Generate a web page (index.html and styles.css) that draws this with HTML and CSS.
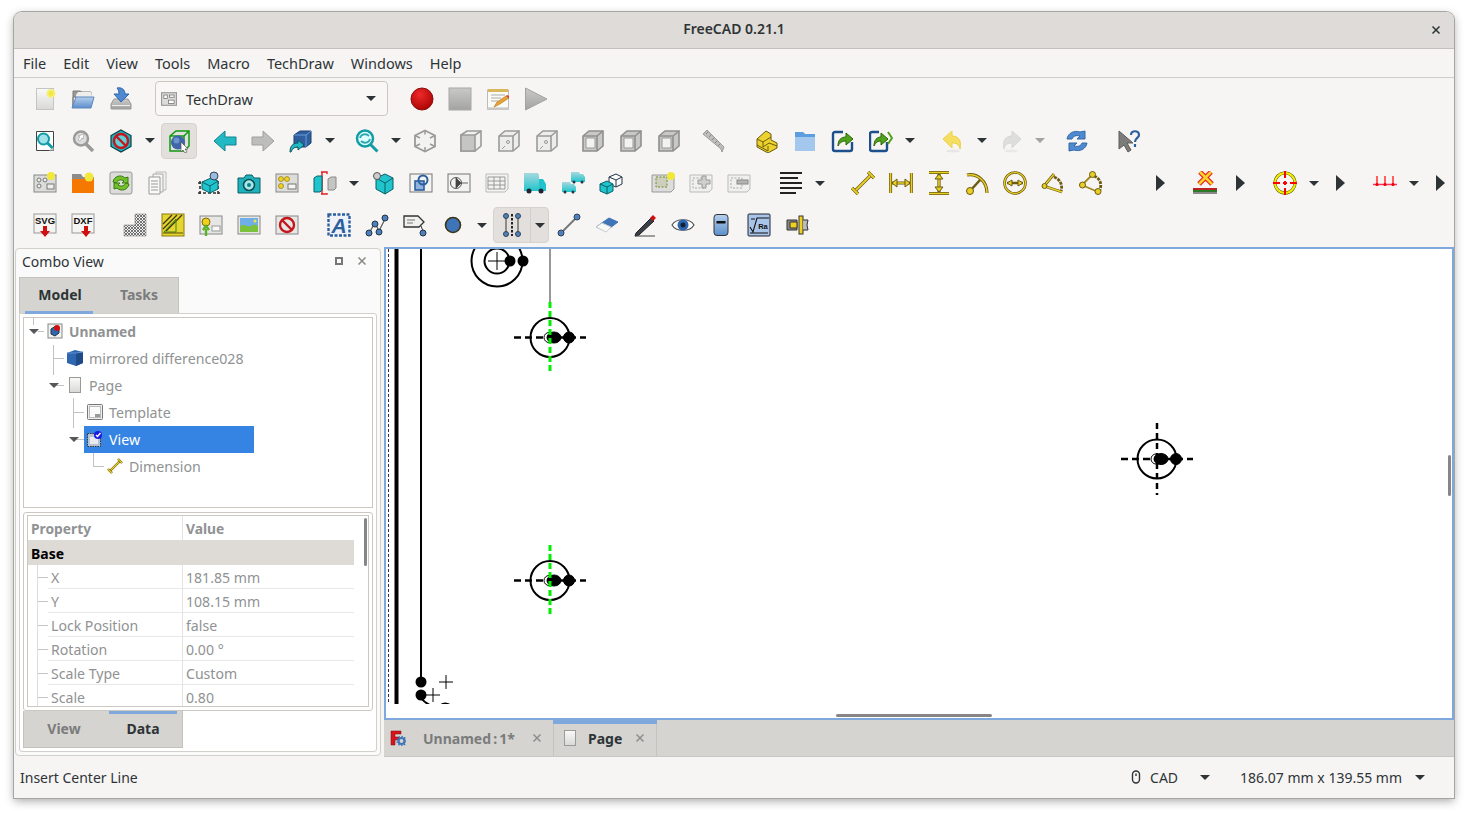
FILE: index.html
```html
<!DOCTYPE html>
<html lang="en">
<head>
    <meta charset="UTF-8">
    <title>FreeCAD 0.21.1</title>
    <link rel="stylesheet" href="styles.css">
</head>
<body>
<!-- icon sprite -->
<svg class="sprite" xmlns="http://www.w3.org/2000/svg">
    <defs>
        <linearGradient id="pg" x1="0" y1="0" x2="0" y2="1"><stop offset="0" stop-color="#fafafa"/><stop offset="1" stop-color="#d8d8d6"/></linearGradient>
        <linearGradient id="blueg" x1="0" y1="0" x2="0" y2="1"><stop offset="0" stop-color="#b5d0ee"/><stop offset="1" stop-color="#5c8fcb"/></linearGradient>
        <linearGradient id="greyg" x1="0" y1="0" x2="0" y2="1"><stop offset="0" stop-color="#c9c9c7"/><stop offset="1" stop-color="#a3a3a1"/></linearGradient>
        <radialGradient id="redg" cx=".4" cy=".3" r=".8"><stop offset="0" stop-color="#ef2929"/><stop offset="1" stop-color="#a40000"/></radialGradient>
        <linearGradient id="teal" x1="0" y1="0" x2="0" y2="1"><stop offset="0" stop-color="#a8d8de"/><stop offset="1" stop-color="#1fc4cc"/></linearGradient>

        <symbol id="i-new" viewBox="0 0 24 24"><rect x="3.5" y="1.5" width="17" height="21" fill="url(#pg)" stroke="#c4c4c2"/><circle cx="18" cy="6.5" r="4.5" fill="#f6ee7c"/><circle cx="18" cy="6.5" r="2.5" fill="#f3e83a"/></symbol>
        <symbol id="i-open" viewBox="0 0 24 24"><path d="M2 20V4h7l2 1h9v5H2z" fill="#999" stroke="#7a7a7a"/><path d="M5 8l2-3h13l1 5H5z" fill="#eee"/><path d="M5 10h18l-3 11H1z" fill="url(#blueg)" stroke="#5c86ba"/></symbol>
        <symbol id="i-save" viewBox="0 0 24 24"><path d="M5 12h14l3 5v5H2v-5z" fill="url(#greyg)" stroke="#999"/><rect x="3" y="18" width="18" height="1" fill="#eee"/><path d="M8 1c5-1 8 2 8 6h4l-8 8-7-8h5c0-3-1-5-2-6z" fill="#4f8ad0" stroke="#2f66a8"/></symbol>
        <symbol id="i-wb" viewBox="0 0 14 14"><rect x=".5" y="1.5" width="13" height="11" fill="#dcdcda" stroke="#999"/><rect x="2.500" y="3.500" width="3" height="3" fill="#fff" stroke="#777" stroke-width=".7"/><rect x="7.500" y="3.500" width="4" height="2" fill="#fff" stroke="#777" stroke-width=".7"/><rect x="6.500" y="8" width="5" height="3" fill="#fff" stroke="#777" stroke-width=".7"/></symbol>
        <symbol id="i-rec" viewBox="0 0 24 24"><circle cx="12" cy="12" r="11" fill="url(#redg)" stroke="#8a1010"/></symbol>
        <symbol id="i-stop" viewBox="0 0 24 24"><rect x="1" y="1" width="22" height="22" fill="url(#greyg)" stroke="#a8a8a6"/></symbol>
        <symbol id="i-macro" viewBox="0 0 24 24"><rect x="1.500" y="3" width="21" height="18" fill="#fbfbf6" stroke="#bbb"/><rect x="2" y="2" width="20" height="3" fill="#d8b85a"/><path d="M5 8h14M5 11h10M5 14h7" stroke="#aaa"/><path d="M8 20l3-5 9-6 3 2-9 6z" fill="#e6a33a" stroke="#b4711a" stroke-width=".6"/><path d="M20 9l3 2 0-2-2-1z" fill="#d33"/><rect x="1" y="21" width="22" height="2" fill="#c8c8c6"/></symbol>
        <symbol id="i-play" viewBox="0 0 24 24"><path d="M1.500 1v22L23 12z" fill="url(#greyg)" stroke="#a3a3a1"/></symbol>

        <symbol id="i-fitall" viewBox="0 0 24 24"><path d="M3.500 2.500h17v19h-17z" fill="#fff" stroke="#444"/><path d="M16 21.500h4.500v-4z" fill="#ccc"/><circle cx="10.500" cy="10" r="5.500" fill="#9fe3e8" stroke="#139ca6" stroke-width="2"/><path d="M14.500 14l5 5" stroke="#139ca6" stroke-width="3"/></symbol>
        <symbol id="i-fitsel" viewBox="0 0 24 24"><circle cx="10" cy="9.500" r="7" fill="#ddd" stroke="#9a9a9a" stroke-width="2.500"/><path d="M15 15l7 7" stroke="#9a9a9a" stroke-width="3.500"/><path d="M13 5l-6 2 2 1-2 3 2 1 2-3 1 1z" fill="#fff" stroke="#888" stroke-width=".5"/></symbol>
        <symbol id="i-draw" viewBox="0 0 24 24"><path d="M12 1l10 5.500v11L12 23 2 17.500v-11z" fill="#1fb2bd" stroke="#0a3f44" stroke-width="1.200"/><circle cx="12" cy="12" r="7" fill="#5fd0d8" stroke="#c4161c" stroke-width="2.400"/><path d="M7 7l10 10" stroke="#c4161c" stroke-width="2.400"/></symbol>
        <symbol id="i-bubble" viewBox="0 0 24 24"><path d="M3 7l6-5h13v15l-5 5H3zM3 7h14v15M17 7l5-5" fill="none" stroke="#109a10" stroke-width="1.500"/><circle cx="11" cy="13.500" r="7" fill="#3e66a8"/><circle cx="9.500" cy="11.500" r="3" fill="#6c93cc"/><path d="M14 13v10l2-2 2 3 2-1-2-3h3z" fill="#fff" stroke="#555" stroke-width=".7"/></symbol>
        <symbol id="i-back" viewBox="0 0 24 24"><path d="M1 12L12 2v6h11v8H12v6z" fill="#22b8c4" stroke="#11858f"/></symbol>
        <symbol id="i-fwd" viewBox="0 0 24 24"><path d="M23 12L12 2v6H1v8h11v6z" fill="#bdbdbb" stroke="#9f9f9d"/></symbol>
        <symbol id="i-sync" viewBox="0 0 24 24"><path d="M5 6l6-4h11v12l-5 4H5z" fill="#2f5e9e" stroke="#1e3f70"/><path d="M5 6h12v12M17 6l5-4" stroke="#6d9bd6" fill="none"/><path d="M1 23c0-6 3-9 8-9v-3l6 5-6 5v-3c-4 0-6 2-7 5z" fill="#22b8c4" stroke="#0e5960"/></symbol>
        <symbol id="i-zoomr" viewBox="0 0 24 24"><circle cx="10" cy="9.500" r="8" fill="#dff" stroke="#139ca6" stroke-width="2.500"/><path d="M15.500 15.500l7 7" stroke="#139ca6" stroke-width="3"/><path d="M5 9c1-4 6-5 9-2M15 10c-1 4-6 5-9 2" fill="none" stroke="#2fa5ad" stroke-width="1.800"/></symbol>
        <symbol id="i-iso" viewBox="0 0 24 24"><path d="M12 1.500l10 5v11l-10 5-10-5v-11z" fill="#f3f3f1" stroke="#9a9a9a" stroke-width="1.800"/><path d="M2 6.500l5 2.500M17 9l5-2.500M12 18v4.500M12 1.500v4M7 15l-5 2.500M17 15l5 2.500" stroke="#9a9a9a" stroke-width="1.500"/></symbol>
        <symbol id="i-front" viewBox="0 0 24 24"><path d="M2 6l6-4h14v15l-6 5H2z" fill="#f0f0ee" stroke="#9a9a9a" stroke-width="1.600"/><path d="M2 6h14v16H2z" fill="#c5c5c3" stroke="#9a9a9a" stroke-width="1.600"/><path d="M16 6l6-4" stroke="#9a9a9a" stroke-width="1.600"/></symbol>
        <symbol id="i-top" viewBox="0 0 24 24"><path d="M2 7l6-5h14v15l-6 5H2z" fill="#ededeb" stroke="#9a9a9a" stroke-width="1.600"/><path d="M2 7h14v15M16 7l6-5" fill="none" stroke="#9a9a9a" stroke-width="1.600"/><circle cx="11" cy="13" r="1.500" fill="none" stroke="#999"/><path d="M5 20l3-3" stroke="#999"/></symbol>
        <symbol id="i-rear" viewBox="0 0 24 24"><path d="M2 7l6-5h14v15l-6 5H2z" fill="#c8c8c6" stroke="#8f8f8f" stroke-width="1.600"/><path d="M5 9h9v10H5z" fill="#f2f2f0" stroke="#9a9a9a"/><path d="M2 7h14v15M16 7l6-5" fill="none" stroke="#8f8f8f" stroke-width="1.600"/></symbol>
        <symbol id="i-ruler" viewBox="0 0 24 24"><path d="M2 5l4-4 17 17-2 5-1-3z" fill="#bdbdbb" stroke="#9a9a9a"/><path d="M7 3l-2 2M10 6l-2 2M13 9l-2 2M16 12l-2 2M19 15l-2 2" stroke="#888"/></symbol>
        <symbol id="i-part" viewBox="0 0 24 24"><path d="M2 10l9-8 5 3v6l6 3v5l-9 5-11-6z" fill="#ecd22c" stroke="#6b5a10"/><path d="M2 10l6 3 8-5M8 13v5l6-4 8 3M2 16l11 6v-5" fill="none" stroke="#6b5a10"/></symbol>
        <symbol id="i-group" viewBox="0 0 24 24"><path d="M2 3h8l2 2h10v17H2z" fill="#a4c7ee"/><path d="M2 3h8l2 2h10v3H2z" fill="#5c9ee0"/></symbol>
        <symbol id="i-link" viewBox="0 0 24 24"><path d="M12 3H4a2 2 0 0 0-2 2v15a2 2 0 0 0 2 2h15a2 2 0 0 0 2-2v-7" fill="none" stroke="#1d4f8a" stroke-width="2.400"/><path d="M7 17c0-6 3-9 8-9V4l7 6-7 6v-4c-3 0-6 1-8 5z" fill="#4ea31a" stroke="#2d640c"/></symbol>
        <symbol id="i-linkall" viewBox="0 0 24 24"><path d="M10 3H3a2 2 0 0 0-2 2v15a2 2 0 0 0 2 2h13a2 2 0 0 0 2-2v-7" fill="none" stroke="#1d4f8a" stroke-width="2.400"/><path d="M5 17c0-6 3-9 7-9V4l7 6-7 6v-4c-3 0-5 1-7 5z" fill="#4ea31a" stroke="#2d640c"/><path d="M19 3l4 6-4 6" fill="none" stroke="#4ea31a" stroke-width="2"/></symbol>
        <symbol id="i-undo" viewBox="0 0 24 24"><path d="M2 10l9-8v5c6 0 10 4 8 13-1-5-4-6-8-6v5z" fill="#f5de62" stroke="#ecd24a"/><ellipse cx="12" cy="22" rx="7" ry="1.500" fill="#e8e6e4"/></symbol>
        <symbol id="i-redo" viewBox="0 0 24 24"><path d="M22 10l-9-8v5C7 7 3 11 5 20c1-5 4-6 8-6v5z" fill="#dededc" stroke="#d6d6d4"/><ellipse cx="12" cy="22" rx="7" ry="1.500" fill="#ebe9e7"/></symbol>
        <symbol id="i-refresh" viewBox="0 0 24 24"><path d="M2 10c1-6 7-9 13-7l5-1v8h-8l3-3c-4-1-7 0-8 3z" fill="#4f8ad0" stroke="#3569a8"/><path d="M22 14c-1 6-7 9-13 7l-5 1v-8h8l-3 3c4 1 7 0 8-3z" fill="#4f8ad0" stroke="#3569a8"/></symbol>
        <symbol id="i-what" viewBox="0 0 24 24"><path d="M2 2v18l5-4 4 7 3-2-4-7h6z" fill="#7c7c7a" stroke="#5c5c5a"/><path d="M14 6c0-5 8-5 8 0 0 3-4 3-4 7M18 15v3" fill="none" stroke="#2c5f9e" stroke-width="2.200"/></symbol>

        <symbol id="i-tplnew" viewBox="0 0 24 24"><rect x="1" y="4" width="22" height="17" fill="#dcdcda" stroke="#888"/><circle cx="6" cy="9" r="2" fill="#eee" stroke="#777"/><circle cx="6" cy="15" r="2" fill="#eee" stroke="#777"/><circle cx="12" cy="9" r="2" fill="#eee" stroke="#777"/><rect x="14" y="13" width="7" height="5" fill="#eee" stroke="#777"/><circle cx="18" cy="5" r="4" fill="#f3e83a"/></symbol>
        <symbol id="i-orange" viewBox="0 0 24 24"><path d="M1 3h9l2 3h11v16H1z" fill="#8c8c8a"/><rect x="1" y="8" width="22" height="14" fill="#f57900"/><circle cx="18" cy="6" r="4.500" fill="#f3e83a"/></symbol>
        <symbol id="i-recomp" viewBox="0 0 24 24"><rect x="1" y="1" width="22" height="22" rx="2" fill="#dcdcda" stroke="#999"/><path d="M4 11c1-6 8-8 12-4l3-1v6h-6l2-2c-3-2-6-1-8 2z" fill="#72c02c" stroke="#3b7a10"/><path d="M20 13c-1 6-8 8-12 4l-3 1v-6h6l-2 2c3 2 6 1 8-2z" fill="#72c02c" stroke="#3b7a10"/></symbol>
        <symbol id="i-pages" viewBox="0 0 24 24"><path d="M9 1h10v18H9z" fill="#f2f2f0" stroke="#bbb"/><path d="M6 3h10v18H6z" fill="#f4f4f2" stroke="#aaa"/><path d="M2 6h11v17H2z" fill="#fafaf8" stroke="#999"/><path d="M4 10h7M4 13h7M4 16h7M4 19h7" stroke="#999"/></symbol>
        <symbol id="i-clip" viewBox="0 0 24 24"><path d="M1 12h4M1 22h22M3 10v14M21 10v14" stroke="#333" stroke-width="1.600" stroke-dasharray="3 2" fill="none"/><path d="M5 11l9-4 7 3v8l-8 4-8-4z" fill="#1fc4cc" stroke="#0c5f66"/><path d="M5 11l8 4 8-5M13 15v7" fill="none" stroke="#0c5f66"/><circle cx="17" cy="5" r="4" fill="#9bd" stroke="#345"/></symbol>
        <symbol id="i-cam" viewBox="0 0 24 24"><path d="M1 7h6l2-3h6l2 3h6v15H1z" fill="#1fb2bd" stroke="#0c5f66"/><circle cx="12" cy="14" r="5.500" fill="#a7e7ea" stroke="#0c4f55" stroke-width="1.600"/><circle cx="12" cy="14" r="2" fill="#0f7f88"/></symbol>
        <symbol id="i-multi" viewBox="0 0 24 24"><rect x="1" y="3" width="22" height="18" fill="#dcdcda" stroke="#888"/><circle cx="6" cy="8" r="2.500" fill="#f0d020" stroke="#806b00" stroke-width=".6"/><circle cx="12" cy="8" r="2.500" fill="#f0d020" stroke="#806b00" stroke-width=".6"/><circle cx="6" cy="15" r="2.500" fill="#f0d020" stroke="#806b00" stroke-width=".6"/><rect x="13" y="13" width="8" height="5" fill="#f5f5f3" stroke="#777"/></symbol>
        <symbol id="i-section" viewBox="0 0 24 24"><path d="M8 1h6v2M8 23h6v-1" fill="none" stroke="#e02020" stroke-width="1.400"/><path d="M9 1v22" stroke="#e02020" stroke-width="1.400"/><path d="M1 7l3-2h5v14l-2 2H1z" fill="#1fc4cc" stroke="#0c5f66"/><path d="M15 8l3-2h5v11l-2 2h-6z" fill="#c4c4c2" stroke="#888"/></symbol>
        <symbol id="i-dcube" viewBox="0 0 24 24"><path d="M5 7l9-4 8 4v11l-8 5-9-5z" fill="#1fc4cc" stroke="#0c5f66"/><path d="M5 7l9 5 8-5M14 12v11" fill="none" stroke="#0c5f66"/><circle cx="6" cy="5" r="3.500" fill="#ccc" stroke="#555"/></symbol>
        <symbol id="i-detail" viewBox="0 0 24 24"><rect x="1" y="3" width="22" height="18" fill="#f3f3f1" stroke="#777"/><rect x="6" y="10" width="9" height="9" fill="#8fb3de" stroke="#2c5f9e" stroke-width="1.600"/><circle cx="14" cy="9" r="4.500" fill="none" stroke="#2c5f9e" stroke-width="2"/></symbol>
        <symbol id="i-annot" viewBox="0 0 24 24"><rect x="1" y="3" width="22" height="18" fill="#f3f3f1" stroke="#777"/><circle cx="9" cy="12" r="5.500" fill="none" stroke="#555"/><path d="M9 7l5 5-5 5zM14 12h7" fill="#444" stroke="#444" stroke-width=".8"/></symbol>
        <symbol id="i-sheet" viewBox="0 0 24 24"><path d="M1 3h22v15l-3 3H1z" fill="#f3f3f1" stroke="#bbb"/><path d="M3 6h17v12H3zM3 10h17M3 14h17M9 6v12M15 6v12" fill="none" stroke="#999"/></symbol>
        <symbol id="i-truck" viewBox="0 0 24 24"><path d="M1 2h14l1 2v16H1z" fill="url(#teal)"/><path d="M16 8h4l3 5v7h-7z" fill="#1fc4cc"/><circle cx="6" cy="20" r="2.500" fill="#223"/><circle cx="18" cy="20" r="2.500" fill="#223"/></symbol>
        <symbol id="i-trucks" viewBox="0 0 24 24"><path d="M10 1h8l1 2h3l2 3v5H10z" fill="url(#teal)"/><circle cx="13" cy="11" r="1.500" fill="#234"/><circle cx="21" cy="11" r="1.500" fill="#234"/><path d="M1 11h8l1 2h3l2 3v5H1z" fill="url(#teal)"/><circle cx="4" cy="21" r="1.500" fill="#234"/><circle cx="12" cy="21" r="1.500" fill="#234"/></symbol>
        <symbol id="i-cubes" viewBox="0 0 24 24"><path d="M10 6l7-3 6 3v7l-6 3-7-3z" fill="#fbfbfb" stroke="#234"/><path d="M10 6l7 3 6-3M17 9v7" fill="none" stroke="#234"/><path d="M1 13l7-3 6 3v7l-6 3-7-3z" fill="#1fc4cc" stroke="#0c5f66"/><path d="M1 13l7 3 6-3M8 16v7" fill="none" stroke="#0c5f66"/></symbol>
        <symbol id="i-clipnew" viewBox="0 0 24 24"><path d="M1 4h22v14l-3 3H1z" fill="#dcdcda" stroke="#999"/><rect x="5" y="6" width="11" height="10" fill="#cdcfbc" stroke="#6a8a2a" stroke-dasharray="2 1.500"/><circle cx="20" cy="5" r="4" fill="#f3e83a"/></symbol>
        <symbol id="i-clipadd" viewBox="0 0 24 24"><path d="M1 4h22v14l-3 3H1z" fill="#f0f0ee" stroke="#bbb"/><rect x="4" y="7" width="11" height="10" fill="none" stroke="#aaa" stroke-dasharray="2 1.500"/><path d="M13 5h4v4h4v4h-4v4h-4v-4H9V9h4z" fill="#cfcfcd" stroke="#999"/></symbol>
        <symbol id="i-clipdel" viewBox="0 0 24 24"><path d="M1 4h22v14l-3 3H1z" fill="#f0f0ee" stroke="#bbb"/><rect x="4" y="7" width="11" height="10" fill="none" stroke="#aaa" stroke-dasharray="2 1.500"/><rect x="10" y="9" width="11" height="4" fill="#b4b4b2" stroke="#888"/></symbol>
        <symbol id="i-align" viewBox="0 0 24 24"><path d="M1 2h22M1 7h18M1 12h22M1 17h22M1 22h16" stroke="#222" stroke-width="1.800"/></symbol>
        <symbol id="i-dlen" viewBox="0 0 24 24"><path d="M1 17l6 6M17 1l6 6M4 20L20 4" fill="none" stroke="#6b5a10" stroke-width="3.200"/><path d="M1 17l6 6M17 1l6 6M5 19L19 5" fill="none" stroke="#e8cf28" stroke-width="1.800"/></symbol>
        <symbol id="i-dh" viewBox="0 0 24 24"><path d="M1.500 2v20M22.500 2v20M3 12h18" fill="none" stroke="#6b5a10" stroke-width="3.200"/><path d="M1.500 2v20M22.500 2v20M5 12h14" fill="none" stroke="#e8cf28" stroke-width="1.600"/><path d="M3 12l5-4v8zM21 12l-5-4v8z" fill="#e8cf28" stroke="#6b5a10"/></symbol>
        <symbol id="i-dv" viewBox="0 0 24 24"><path d="M2 1.500h20M2 22.500h20M12 3v18" fill="none" stroke="#6b5a10" stroke-width="3.200"/><path d="M2 1.500h20M2 22.500h20M12 5v14" fill="none" stroke="#e8cf28" stroke-width="1.600"/><path d="M12 3l-4 5h8zM12 21l-4-5h8z" fill="#e8cf28" stroke="#6b5a10"/></symbol>
        <symbol id="i-drad" viewBox="0 0 24 24"><path d="M2 4c10-2 20 6 20 18" fill="none" stroke="#6b5a10" stroke-width="3.200"/><path d="M2 4c10-2 20 6 20 18" fill="none" stroke="#e8cf28" stroke-width="1.500"/><path d="M5 20L15 9" stroke="#6b5a10" stroke-width="2.500"/><circle cx="5" cy="20" r="3.500" fill="#e8cf28" stroke="#6b5a10"/></symbol>
        <symbol id="i-ddia" viewBox="0 0 24 24"><circle cx="12" cy="12" r="10.500" fill="none" stroke="#6b5a10" stroke-width="2.600"/><circle cx="12" cy="12" r="10.500" fill="none" stroke="#e8cf28" stroke-width="1.200"/><path d="M4 12h16" stroke="#6b5a10" stroke-width="2.500"/><path d="M4 12l5-3v6zM20 12l-5-3v6z" fill="#e8cf28" stroke="#6b5a10"/></symbol>
        <symbol id="i-dang" viewBox="0 0 24 24"><path d="M3 15L13 3M3 15l18 6" fill="none" stroke="#6b5a10" stroke-width="2.800"/><path d="M13 6c6 2 9 8 7 14" fill="none" stroke="#6b5a10" stroke-width="2.800" stroke-dasharray="3 1"/><path d="M3 15L13 3M3 15l18 6" fill="none" stroke="#e8cf28" stroke-width="1.400"/><circle cx="3.500" cy="15" r="2.500" fill="#e8cf28" stroke="#6b5a10"/></symbol>
        <symbol id="i-dang3" viewBox="0 0 24 24"><path d="M3 14L13 4M3 14l16 7" fill="none" stroke="#a08a20" stroke-width="1.800"/><path d="M15 5c6 2 8 8 6 14" fill="none" stroke="#6b5a10" stroke-width="2.800" stroke-dasharray="3 1"/><circle cx="3.500" cy="14" r="3" fill="#e8cf28" stroke="#6b5a10"/><circle cx="13.500" cy="3.500" r="3" fill="#e8cf28" stroke="#6b5a10"/><circle cx="19" cy="20.500" r="3" fill="#e8cf28" stroke="#6b5a10"/></symbol>
        <symbol id="i-weld" viewBox="0 0 24 24"><path d="M0 17h24v2H0z" fill="#b22"/><path d="M0 19h24v2H0z" fill="#2a7a2a"/><path d="M0 21h24v2H0z" fill="#888"/><path d="M7 1l12 12M18 1L6 13" stroke="#f02020" stroke-width="5"/><path d="M7 1l12 12M18 1L6 13" stroke="#f7d428" stroke-width="2.500"/></symbol>
        <symbol id="i-cmark" viewBox="0 0 24 24"><circle cx="12" cy="12" r="10" fill="none" stroke="#5a5000" stroke-width="3"/><circle cx="12" cy="12" r="10" fill="none" stroke="#f2ee00" stroke-width="2"/><path d="M12 0v7M12 10v4M12 17v7M0 12h7M10 12h4M17 12h7" stroke="#f00" stroke-width="2"/></symbol>
        <symbol id="i-bolt" viewBox="0 0 24 24"><path d="M0 13.500h24" stroke="#f36" stroke-width="1.400"/><path d="M4 5v9M12 5v9M20 5v9" stroke="#f22" stroke-width="1.400"/><circle cx="4" cy="13.500" r="1.600" fill="#e00"/><circle cx="12" cy="13.500" r="1.600" fill="#e00"/><circle cx="20" cy="13.500" r="1.600" fill="#e00"/></symbol>

        <symbol id="i-svg" viewBox="0 0 24 24"><rect x="1" y="1" width="22" height="19" fill="#f4f4f2" stroke="#999"/><text x="12" y="11" class="ico-txt">SVG</text><path d="M10 13h4v5h3l-5 6-5-6h3z" fill="#d01010"/></symbol>
        <symbol id="i-dxf" viewBox="0 0 24 24"><rect x="1" y="1" width="22" height="19" fill="#f4f4f2" stroke="#999"/><text x="12" y="11" class="ico-txt">DXF</text><path d="M13 13h4v5h3l-5 6-5-6h3z" fill="#d01010"/></symbol>
        <symbol id="i-hatch" viewBox="0 0 24 24"><defs><pattern id="chk" width="3" height="3" patternUnits="userSpaceOnUse"><rect width="3" height="3" fill="#eee"/><path d="M0 0l3 3M3 0L0 3" stroke="#555" stroke-width=".8"/></pattern></defs><path d="M12 1h11v22H1V12h11z" fill="url(#chk)" stroke="#888" stroke-width=".6"/></symbol>
        <symbol id="i-geohatch" viewBox="0 0 24 24"><rect x="1" y="1" width="22" height="22" fill="#e6d430" stroke="#8a7a10"/><path d="M2 11L11 2M2 16L16 2M5 18L21 2" stroke="#3c3608" stroke-width="1.300"/><path d="M3 19l12-13v13z" fill="none" stroke="#3c8a1a"/><path d="M2 20h20" stroke="#5a4f08" stroke-width="1.200"/></symbol>
        <symbol id="i-sym" viewBox="0 0 24 24"><rect x="1" y="3" width="22" height="18" fill="#e6e6e4" stroke="#888"/><circle cx="7" cy="9" r="4" fill="#f0d020" stroke="#806b00"/><path d="M7 23v-7M4 17l3-4 3 4" stroke="#57b32a" stroke-width="2.400" fill="none"/><rect x="13" y="13" width="8" height="5" fill="#f8f8f6" stroke="#999"/></symbol>
        <symbol id="i-img" viewBox="0 0 24 24"><rect x="1" y="3" width="22" height="18" fill="#e6e6e4" stroke="#888"/><rect x="3" y="5" width="18" height="14" fill="#70aee8"/><path d="M3 19v-6c5-3 8 2 11 0s5-1 7 0v6z" fill="#7cc13b"/><circle cx="18" cy="8" r="1.500" fill="#f3e83a"/></symbol>
        <symbol id="i-nosym" viewBox="0 0 24 24"><rect x="1" y="3" width="22" height="18" fill="#e6e6e4" stroke="#888"/><circle cx="12" cy="12" r="7" fill="none" stroke="#c4161c" stroke-width="2.400"/><path d="M7 7l10 10" stroke="#c4161c" stroke-width="2.400"/></symbol>
        <symbol id="i-txt" viewBox="0 0 24 24"><rect x="1.500" y="1.500" width="21" height="21" fill="#eef2f8" stroke="#2c5f9e" stroke-width="2.400" stroke-dasharray="3 1.500"/><text x="12" y="20" class="ico-a">A</text></symbol>
        <symbol id="i-nodes" viewBox="0 0 24 24"><path d="M4 20L10 10 14 18 21 4" fill="none" stroke="#555" stroke-width="1.200"/><circle cx="4" cy="20" r="3" fill="#4f7fbd" stroke="#234"/><circle cx="10" cy="11" r="3" fill="#4f7fbd" stroke="#234"/><circle cx="14" cy="19" r="3" fill="#4f7fbd" stroke="#234"/><circle cx="20" cy="5" r="3" fill="#4f7fbd" stroke="#234"/></symbol>
        <symbol id="i-tag" viewBox="0 0 24 24"><path d="M1 3h14l6 6-5 5H1z" fill="#f0f0ee" stroke="#333" stroke-width="1.300"/><path d="M4 7h8M4 10h6" stroke="#777"/><path d="M18 13l2 5" stroke="#333"/><circle cx="20" cy="20" r="3" fill="#4f7fbd" stroke="#234"/></symbol>
        <symbol id="i-circ" viewBox="0 0 24 24"><circle cx="12" cy="12" r="7.500" fill="#3f74b8" stroke="#3a3414" stroke-width="1.600"/></symbol>
        <symbol id="i-clines" viewBox="0 0 24 24"><path d="M6 3v18M18 3v18" stroke="#777" stroke-width="1.600"/><path d="M12 1v22" stroke="#222" stroke-width="2" stroke-dasharray="2.500 1.500"/><circle cx="6" cy="3" r="2.500" fill="#4f7fbd" stroke="#345"/><circle cx="6" cy="21" r="2.500" fill="#4f7fbd" stroke="#345"/><circle cx="18" cy="3" r="2.500" fill="#4f7fbd" stroke="#345"/><circle cx="18" cy="21" r="2.500" fill="#4f7fbd" stroke="#345"/></symbol>
        <symbol id="i-cosm" viewBox="0 0 24 24"><path d="M4 20L20 4" stroke="#777" stroke-width="2"/><circle cx="4" cy="20" r="3" fill="#4f7fbd" stroke="#345"/><circle cx="20" cy="4" r="3" fill="#4f7fbd" stroke="#345"/></symbol>
        <symbol id="i-erase" viewBox="0 0 24 24"><path d="M1 14L14 5l9 4-12 9z" fill="#3f74b8" stroke="#3f74b8"/><path d="M1 14l6-4 9 4-5 5z" fill="#f8f8f6" stroke="#ccc"/></symbol>
        <symbol id="i-pen" viewBox="0 0 24 24"><path d="M3 20L18 5l3 3L6 22l-4 1z" fill="#3b4048" stroke="#222"/><path d="M17 5l3-3 3 3-3 3z" fill="#d01010"/><path d="M2 23h20" stroke="#444"/></symbol>
        <symbol id="i-eye" viewBox="0 0 24 24"><path d="M1 12C5 5 19 5 23 12 19 19 5 19 1 12z" fill="#fff" stroke="#555" stroke-width="1.200"/><circle cx="12" cy="12" r="5.500" fill="#2f66b0"/><circle cx="12" cy="12" r="2.500" fill="#123"/></symbol>
        <symbol id="i-pill" viewBox="0 0 24 24"><rect x="5" y="1.500" width="14" height="21" rx="3" fill="url(#blueg)" stroke="#333"/><rect x="7.500" y="8" width="9" height="2.500" fill="#111"/></symbol>
        <symbol id="i-ra" viewBox="0 0 24 24"><rect x="1" y="1" width="22" height="22" rx="1" fill="#a8c4e8" stroke="#223"/><path d="M3 14l3 5 4-14h12M4 6h4M3 20h18" fill="none" stroke="#111" stroke-width="1.100"/><text x="16" y="16" class="ico-ra">Ra</text></symbol>
        <symbol id="i-weldsym" viewBox="0 0 24 24"><path d="M2 7h10v10H2z" fill="#888" stroke="#333"/><path d="M5 9h7v6H5z" fill="#f0d020" stroke="#333"/><rect x="14" y="3" width="4" height="18" fill="#f0d020" stroke="#333"/><path d="M18 7h5l-1 5 1 5h-5" fill="#bbb" stroke="#333"/></symbol>

        <symbol id="i-doc" viewBox="0 0 16 16"><rect x="1" y="1" width="14" height="14" fill="#f2f2f0" stroke="#888"/><path d="M4 6l5-3 3 2v5l-4 3-4-2z" fill="#2f66b0" stroke="#234"/><circle cx="10" cy="5" r="3" fill="#d01010"/></symbol>
        <symbol id="i-mirror" viewBox="0 0 16 16"><path d="M0 3l8-3 8 2v11l-7 3-9-3z" fill="#2f66b0"/><path d="M9 3v13l7-3V2z" fill="#1f4a88"/><path d="M0 3l9 0 7-1" stroke="#5f8fd0" fill="none"/></symbol>
        <symbol id="i-page" viewBox="0 0 12 16"><rect x=".5" y=".5" width="11" height="15" fill="url(#pg)" stroke="#9a9a98"/></symbol>
        <symbol id="i-tpl" viewBox="0 0 16 16"><rect x=".5" y=".5" width="15" height="15" rx="1" fill="#eee" stroke="#777"/><rect x="2.500" y="2.500" width="11" height="11" fill="#fafafa" stroke="#bbb"/><rect x="8" y="10" width="5" height="3" fill="#999"/></symbol>
        <symbol id="i-view" viewBox="0 0 16 16"><rect x=".5" y="2.500" width="13" height="13" fill="#b9c3d0" stroke="#333" stroke-dasharray="1.500 1"/><rect x="3" y="6" width="8" height="7" fill="#e8ebef"/><circle cx="11" cy="4" r="4" fill="#1a1ae0"/><path d="M9 4l1.500 1.500L13.500 2" stroke="#fff" stroke-width="1.400" fill="none"/></symbol>
        <symbol id="i-dim" viewBox="0 0 16 16"><path d="M1 11l4 4M11 1l4 4M3 13L13 3" stroke="#6b5a10" stroke-width="2.400" fill="none"/><path d="M1 11l4 4M11 1l4 4M4 12l8-8" stroke="#e8cf28" stroke-width="1.200" fill="none"/></symbol>
        <symbol id="i-fc" viewBox="0 0 16 16"><path d="M1 1h10v3H5v3h4v3H5v5H1z" fill="#d8141c" stroke="#7a0a0a" stroke-width=".5"/><circle cx="11.500" cy="11" r="3" fill="none" stroke="#3f74b8" stroke-width="2.200"/><circle cx="11.500" cy="11" r="4.600" fill="none" stroke="#3f74b8" stroke-width="1.200" stroke-dasharray="1.500 1.500"/></symbol>
        <symbol id="i-x" viewBox="0 0 10 10"><path d="M1.500 1.500l7 7M8.500 1.500l-7 7" stroke="currentColor" stroke-width="1.500"/></symbol>
        <symbol id="i-drawing-sym" viewBox="-37 -37 74 74" overflow="visible">
            <circle r="19.500" fill="none" stroke="#000" stroke-width="2"/>
            <circle cx="-1" r="5" fill="none" stroke="#000" stroke-width="1"/>
            <ellipse cx="4" rx="7" ry="5.500" fill="#000"/>
            <circle cx="19" r="5.500" fill="#000"/>
            <path d="M-36 0H36" stroke="#000" stroke-width="2.500" stroke-dasharray="7 4"/>
        </symbol>
    </defs>
</svg>

<div class="window">
    <div class="titlebar">
        <span class="title">FreeCAD 0.21.1</span>
        <svg class="title-close"><use href="#i-x"/></svg>
    </div>
    <div class="menubar">
        <span>File</span><span>Edit</span><span>View</span><span>Tools</span><span>Macro</span><span>TechDraw</span><span>Windows</span><span>Help</span>
    </div>

    <!-- toolbar rij 1 -->
    <div class="toolrow row-1">
        <b class="tb"><svg><use href="#i-new"/></svg></b>
        <b class="tb"><svg><use href="#i-open"/></svg></b>
        <b class="tb"><svg><use href="#i-save"/></svg></b>
        <i class="sp s15"></i>
        <div class="wb-combo"><svg class="wb-icon"><use href="#i-wb"/></svg><span>TechDraw</span><em class="arr combo-arr"></em></div>
        <i class="sp s15"></i>
        <b class="tb"><svg><use href="#i-rec"/></svg></b>
        <b class="tb"><svg><use href="#i-stop"/></svg></b>
        <b class="tb"><svg><use href="#i-macro"/></svg></b>
        <b class="tb"><svg><use href="#i-play"/></svg></b>
    </div>

    <!-- toolbar rij 2 -->
    <div class="toolrow row-2">
        <b class="tb"><svg><use href="#i-fitall"/></svg></b>
        <b class="tb"><svg><use href="#i-fitsel"/></svg></b>
        <b class="tb"><svg><use href="#i-draw"/></svg></b>
        <b class="da"><em class="arr"></em></b>
        <b class="tb checked"><svg><use href="#i-bubble"/></svg></b>
        <i class="sp s8"></i>
        <b class="tb"><svg><use href="#i-back"/></svg></b>
        <b class="tb"><svg><use href="#i-fwd"/></svg></b>
        <b class="tb"><svg><use href="#i-sync"/></svg></b>
        <b class="da"><em class="arr"></em></b>
        <i class="sp s8"></i>
        <b class="tb"><svg><use href="#i-zoomr"/></svg></b>
        <b class="da"><em class="arr"></em></b>
        <b class="tb"><svg><use href="#i-iso"/></svg></b>
        <i class="sp s8"></i>
        <b class="tb"><svg><use href="#i-front"/></svg></b>
        <b class="tb"><svg><use href="#i-top"/></svg></b>
        <b class="tb"><svg><use href="#i-top"/></svg></b>
        <i class="sp s8"></i>
        <b class="tb"><svg><use href="#i-rear"/></svg></b>
        <b class="tb"><svg><use href="#i-rear"/></svg></b>
        <b class="tb"><svg><use href="#i-rear"/></svg></b>
        <i class="sp s6"></i>
        <b class="tb"><svg><use href="#i-ruler"/></svg></b>
        <i class="sp s16"></i>
        <b class="tb"><svg><use href="#i-part"/></svg></b>
        <b class="tb"><svg><use href="#i-group"/></svg></b>
        <b class="tb"><svg><use href="#i-link"/></svg></b>
        <b class="tb"><svg><use href="#i-linkall"/></svg></b>
        <b class="da"><em class="arr"></em></b>
        <i class="sp s14"></i>
        <b class="tb"><svg><use href="#i-undo"/></svg></b>
        <b class="da"><em class="arr"></em></b>
        <b class="tb"><svg><use href="#i-redo"/></svg></b>
        <b class="da"><em class="arr off"></em></b>
        <i class="sp s8"></i>
        <b class="tb"><svg><use href="#i-refresh"/></svg></b>
        <i class="sp s14"></i>
        <b class="tb"><svg><use href="#i-what"/></svg></b>
    </div>

    <!-- toolbar rij 3 -->
    <div class="toolrow">
        <b class="tb"><svg><use href="#i-tplnew"/></svg></b>
        <b class="tb"><svg><use href="#i-orange"/></svg></b>
        <b class="tb"><svg><use href="#i-recomp"/></svg></b>
        <b class="tb"><svg><use href="#i-pages"/></svg></b>
        <i class="sp s12"></i>
        <b class="tb"><svg><use href="#i-clip"/></svg></b>
        <i class="sp s2"></i>
        <b class="tb"><svg><use href="#i-cam"/></svg></b>
        <b class="tb"><svg><use href="#i-multi"/></svg></b>
        <b class="tb"><svg><use href="#i-section"/></svg></b>
        <b class="da"><em class="arr"></em></b>
        <b class="tb"><svg><use href="#i-dcube"/></svg></b>
        <b class="tb"><svg><use href="#i-detail"/></svg></b>
        <b class="tb"><svg><use href="#i-annot"/></svg></b>
        <b class="tb"><svg><use href="#i-sheet"/></svg></b>
        <b class="tb"><svg><use href="#i-truck"/></svg></b>
        <b class="tb"><svg><use href="#i-trucks"/></svg></b>
        <b class="tb"><svg><use href="#i-cubes"/></svg></b>
        <i class="sp s14"></i>
        <b class="tb"><svg><use href="#i-clipnew"/></svg></b>
        <b class="tb"><svg><use href="#i-clipadd"/></svg></b>
        <b class="tb"><svg><use href="#i-clipdel"/></svg></b>
        <i class="sp s14"></i>
        <b class="tb"><svg><use href="#i-align"/></svg></b>
        <b class="da"><em class="arr"></em></b>
        <i class="sp s14"></i>
        <b class="tb"><svg><use href="#i-dlen"/></svg></b>
        <b class="tb"><svg><use href="#i-dh"/></svg></b>
        <b class="tb"><svg><use href="#i-dv"/></svg></b>
        <b class="tb"><svg><use href="#i-drad"/></svg></b>
        <b class="tb"><svg><use href="#i-ddia"/></svg></b>
        <b class="tb"><svg><use href="#i-dang"/></svg></b>
        <b class="tb"><svg><use href="#i-dang3"/></svg></b>
        <i class="sp s40"></i>
        <b class="da"><em class="more"></em></b>
        <i class="sp s16"></i>
        <b class="tb"><svg><use href="#i-weld"/></svg></b>
        <i class="sp s6"></i>
        <b class="da"><em class="more"></em></b>
        <i class="sp s16"></i>
        <b class="tb"><svg><use href="#i-cmark"/></svg></b>
        <b class="da"><em class="arr"></em></b>
        <i class="sp s6"></i>
        <b class="da"><em class="more"></em></b>
        <i class="sp s16"></i>
        <b class="tb"><svg><use href="#i-bolt"/></svg></b>
        <b class="da"><em class="arr"></em></b>
        <i class="sp s6"></i>
        <b class="da"><em class="more"></em></b>
    </div>

    <!-- toolbar rij 4 -->
    <div class="toolrow">
        <b class="tb"><svg><use href="#i-svg"/></svg></b>
        <b class="tb"><svg><use href="#i-dxf"/></svg></b>
        <i class="sp s14"></i>
        <b class="tb"><svg><use href="#i-hatch"/></svg></b>
        <b class="tb"><svg><use href="#i-geohatch"/></svg></b>
        <b class="tb"><svg><use href="#i-sym"/></svg></b>
        <b class="tb"><svg><use href="#i-img"/></svg></b>
        <b class="tb"><svg><use href="#i-nosym"/></svg></b>
        <i class="sp s14"></i>
        <b class="tb"><svg><use href="#i-txt"/></svg></b>
        <b class="tb"><svg><use href="#i-nodes"/></svg></b>
        <b class="tb"><svg><use href="#i-tag"/></svg></b>
        <b class="tb"><svg><use href="#i-circ"/></svg></b>
        <b class="da"><em class="arr"></em></b>
        <i class="sp s1"></i>
        <div class="split">
            <b class="split-main"><svg><use href="#i-clines"/></svg></b>
            <b class="split-arrow"><em class="arr"></em></b>
        </div>
        <i class="sp s1"></i>
        <b class="tb"><svg><use href="#i-cosm"/></svg></b>
        <b class="tb"><svg><use href="#i-erase"/></svg></b>
        <b class="tb"><svg><use href="#i-pen"/></svg></b>
        <b class="tb"><svg><use href="#i-eye"/></svg></b>
        <b class="tb"><svg><use href="#i-pill"/></svg></b>
        <b class="tb"><svg><use href="#i-ra"/></svg></b>
        <b class="tb"><svg><use href="#i-weldsym"/></svg></b>
    </div>

    <div class="workspace">
        <!-- Combo view -->
        <div class="dock">
            <div class="dock-title">
                <span>Combo View</span>
                <span class="dock-btn float"></span>
                <svg class="dock-btn"><use href="#i-x"/></svg>
            </div>
            <div class="tabs-top">
                <span class="tab on">Model</span><span class="tab">Tasks</span>
            </div>
            <div class="pane">
                <div class="tree">
                    <svg class="tree-lines" viewBox="0 0 350 191">
                        <path d="M10.500 0v8M15 14.500h6M30.500 28v30M31 41.500h10M31 68.500h10M50.500 81v30M51 95.500h10M51 122.500h10M70.500 136v14M71 149.500h10" stroke="#c4c2bf" fill="none"/>
                        <path d="M6 12h10l-5 5zM26 66h10l-5 5zM46 120h10l-5 5z" fill="#55575a"/>
                    </svg>
                    <div class="node d0 bold"><svg class="n-ic"><use href="#i-doc"/></svg><span>Unnamed</span></div>
                    <div class="node d1"><svg class="n-ic"><use href="#i-mirror"/></svg><span>mirrored difference028</span></div>
                    <div class="node d1"><svg class="n-ic"><use href="#i-page"/></svg><span>Page</span></div>
                    <div class="node d2"><svg class="n-ic"><use href="#i-tpl"/></svg><span>Template</span></div>
                    <div class="node d2 sel"><svg class="n-ic"><use href="#i-view"/></svg><span>View</span></div>
                    <div class="node d3"><svg class="n-ic"><use href="#i-dim"/></svg><span>Dimension</span></div>
                </div>
                <div class="props-frame">
                    <div class="props">
                        <div class="ptable">
                            <div class="prow head"><span>Property</span><span>Value</span></div>
                            <div class="prow group"><span>Base</span></div>
                            <div class="prow"><span>X</span><span>181.85 mm</span></div>
                            <div class="prow"><span>Y</span><span>108.15 mm</span></div>
                            <div class="prow"><span>Lock Position</span><span>false</span></div>
                            <div class="prow"><span>Rotation</span><span>0.00 °</span></div>
                            <div class="prow"><span>Scale Type</span><span>Custom</span></div>
                            <div class="prow"><span>Scale</span><span>0.80</span></div>
                        </div>
                        <div class="pscroll"><em></em></div>
                    </div>
                </div>
                <div class="tabs-bottom">
                    <span class="tab">View</span><span class="tab on">Data</span>
                </div>
            </div>
        </div>

        <!-- Tekening -->
        <div class="central">
            <div class="viewport">
                <svg class="drawing" viewBox="386 249 1066 469">
                    <defs><clipPath id="sheet"><rect x="386" y="249" width="1066" height="455"/></clipPath></defs>
                    <g clip-path="url(#sheet)" fill="none" stroke="#000">
                        <path d="M388.500 249V704" stroke="#333" stroke-dasharray="3 2"/>
                        <path d="M396.500 249V704" stroke-width="4"/>
                        <path d="M421 249V682" stroke-width="2"/>
                        <path d="M550 249V303" stroke="#777" stroke-width="1.500"/>
                        <circle cx="497" cy="261" r="25.500" stroke-width="2"/>
                        <circle cx="497" cy="261" r="12.500" stroke-width="2"/>
                        <path d="M488 261h18M497 252v18"/>
                        <circle cx="510" cy="261" r="5.500" fill="#000" stroke="none"/>
                        <circle cx="523" cy="261" r="5.500" fill="#000" stroke="none"/>
                        <use href="#i-drawing-sym" x="513" y="300.500" width="74" height="74"/>
                        <path d="M550 302V374" stroke="#00ee00" stroke-width="3" stroke-dasharray="6 3"/>
                        <use href="#i-drawing-sym" x="513" y="543.500" width="74" height="74"/>
                        <path d="M550 545V617" stroke="#00ee00" stroke-width="3" stroke-dasharray="6 3"/>
                        <use href="#i-drawing-sym" x="1120" y="422" width="74" height="74"/>
                        <path d="M1157 423V495" stroke-width="2.500" stroke-dasharray="6 4"/>
                        <circle cx="421" cy="682" r="5.500" fill="#000" stroke="none"/>
                        <circle cx="421" cy="695" r="5.500" fill="#000" stroke="none"/>
                        <path d="M439 682h14M446 675v14M426 695h14M433 688v14"/>
                        <path d="M421 698c3 4 6 6 11 8M441 705c2-2 6-2 9 0" stroke-width="2"/>
                    </g>
                </svg>
                <em class="vscroll"></em>
                <em class="hscroll"></em>
            </div>
            <div class="doc-tabs">
                <div class="doc-tab first"><svg class="dt-ic"><use href="#i-fc"/></svg><span>Unnamed : 1*</span><svg class="dt-x"><use href="#i-x"/></svg></div>
                <div class="doc-tab on"><svg class="dt-pg"><use href="#i-page"/></svg><span>Page</span><svg class="dt-x"><use href="#i-x"/></svg></div>
            </div>
        </div>
    </div>

    <div class="statusbar">
        <span>Insert Center Line</span>
        <svg class="mouse" viewBox="0 0 10 14"><rect x="1.500" y="1" width="7" height="12" rx="3.500" fill="none" stroke="#2e3436" stroke-width="1.400"/><path d="M5 3.500v2.500" stroke="#2e3436" stroke-width="1.400"/></svg>
        <span class="cad">CAD</span>
        <em class="arr cad-arr"></em>
        <span class="size">186.07 mm x 139.55 mm</span>
        <em class="arr size-arr"></em>
    </div>
</div>
</body>
</html>
```

FILE: styles.css
```css
html, body {
    margin: 0;
    padding: 0;
    height: 815px;
    overflow: hidden;
    background: #ffffff;
}
body {
    font-family: "Noto Sans", sans-serif;
    font-size: 14.5px;
    color: #2e3436;
}
.sprite {
    position: absolute;
    width: 0;
    height: 0;
}
.ico-txt {
    font: bold 9.500px "Liberation Sans", sans-serif;
    text-anchor: middle;
    fill: #111;
}
.ico-a {
    font: italic bold 21px "Liberation Sans", sans-serif;
    text-anchor: middle;
    fill: #2c5f9e;
}
.ico-ra {
    font: bold 7.500px "Liberation Sans", sans-serif;
    text-anchor: middle;
    fill: #111;
}

.window {
    box-sizing: border-box;
    width: 1440px;
    height: 786px;
    margin: 12px 0 0 14px;
    background: #f6f5f4;
    border-radius: 8px 8px 0 0;
    box-shadow: 0 0 0 1px #a5a5a3, 0 3px 10px rgba(0, 0, 0, 0.35);
    display: flex;
    flex-direction: column;
    overflow: hidden;
}

/* titel en menu */
.titlebar {
    box-sizing: border-box;
    height: 37px;
    flex: none;
    padding-bottom: 3px;
    background: #dedbd8;
    border-bottom: 1px solid #c4bfba;
    display: flex;
    align-items: center;
    justify-content: center;
    position: relative;
}
.title {
    font-weight: 600;
    font-size: 14px;
}
.title-close {
    position: absolute;
    right: 13px;
    top: 13px;
    width: 10px;
    height: 10px;
    color: #2e3436;
}
.menubar {
    box-sizing: border-box;
    height: 29px;
    flex: none;
    border-bottom: 1px solid #cfcdca;
    display: flex;
    align-items: center;
    gap: 17px;
    padding-left: 9px;
}

/* toolbars */
.toolrow {
    height: 42px;
    flex: none;
    display: flex;
    align-items: center;
    padding-left: 12px;
}
.row-1 {
    height: 41px;
}
.row-2 {
    height: 43px;
}
.tb, .da {
    display: flex;
    align-items: center;
    justify-content: center;
    flex: none;
    height: 36px;
    width: 38px;
}
.da {
    width: 20px;
}
.tb svg, .split-main svg {
    width: 24px;
    height: 24px;
}
.checked {
    box-sizing: border-box;
    width: 36px;
    margin: 0 1px;
    background: #e2dfdc;
    border: 1px solid #d6d3cf;
    border-radius: 4px;
}
.arr {
    display: block;
    width: 0;
    height: 0;
    border-left: 5.500px solid transparent;
    border-right: 5.500px solid transparent;
    border-top: 5.500px solid #2e3436;
}
.arr.off {
    border-top-color: #a0a2a3;
}
.more {
    display: block;
    width: 0;
    height: 0;
    border-top: 8px solid transparent;
    border-bottom: 8px solid transparent;
    border-left: 9px solid #2e3436;
}
.sp {
    flex: none;
    display: block;
}
.s1 { width: 1px; }
.s2 { width: 2px; }
.s6 { width: 6px; }
.s8 { width: 8px; }
.s12 { width: 12px; }
.s14 { width: 14px; }
.s15 { width: 15px; }
.s16 { width: 16px; }
.s40 { width: 40px; }

.wb-combo {
    box-sizing: border-box;
    flex: none;
    width: 233px;
    height: 35px;
    background: #f8f7f6;
    border: 1px solid #cdc7c2;
    border-radius: 4px;
    display: flex;
    align-items: center;
    padding: 0 11px 0 5px;
}
.wb-icon {
    width: 16px;
    height: 16px;
    margin-right: 9px;
}
.combo-arr {
    margin-left: auto;
}
.split {
    box-sizing: border-box;
    flex: none;
    width: 56px;
    height: 36px;
    display: flex;
    background: #e2dfdc;
    border: 1px solid #d6d3cf;
    border-radius: 4px;
}
.split-main {
    width: 36px;
    display: flex;
    align-items: center;
    justify-content: center;
    border-right: 1px solid #d2cfcb;
}
.split-arrow {
    flex: 1;
    display: flex;
    align-items: center;
    justify-content: center;
}

/* werkgebied */
.workspace {
    flex: 1;
    min-height: 0;
    display: flex;
    margin-top: 1px;
}
.dock {
    box-sizing: border-box;
    width: 366px;
    height: 508px;
    margin: 1px 0 0 1px;
    background: #fafafa;
    border: 1px solid #d3cfca;
    border-radius: 4px;
    padding: 0 3px;
    display: flex;
    flex-direction: column;
}
.dock-title {
    box-sizing: border-box;
    height: 28px;
    flex: none;
    display: flex;
    align-items: center;
    padding: 0 0 4px 3px;
    gap: 14px;
}
.dock-title span:first-child {
    margin-right: auto;
    font-size: 14px;
}
.dock-btn {
    width: 10px;
    height: 10px;
    color: #888a85;
    margin-right: 10px;
}
.float {
    box-sizing: border-box;
    width: 8px;
    height: 8px;
    border: 2px solid #777;
    margin-right: 0;
}
.tabs-top {
    flex: none;
    display: flex;
    width: 160px;
    height: 36px;
    background: #d5d4d1;
    border: 1px solid #c4c2bd;
    border-bottom: 0;
    box-sizing: border-box;
}
.tab {
    width: 80px;
    box-sizing: border-box;
    padding-bottom: 2px;
    display: flex;
    align-items: center;
    justify-content: center;
    font-weight: 700;
    font-size: 14px;
    color: #7b7c7c;
    position: relative;
}
.tabs-top .tab + .tab {
    width: 78px;
}
.tab.on {
    color: #2e3436;
}
.tabs-top .tab.on::after {
    content: "";
    position: absolute;
    left: 5px;
    right: 7px;
    bottom: -1px;
    height: 3px;
    background: #7fa8dc;
}
.tabs-bottom .tab.on::after {
    content: "";
    position: absolute;
    left: 5px;
    right: 5px;
    top: 0;
    height: 3px;
    background: #7fa8dc;
}
.pane {
    box-sizing: border-box;
    flex: none;
    width: 358px;
    height: 439px;
    background: #fff;
    border: 1px solid #d3cfca;
    border-radius: 0 3px 3px 3px;
    padding: 3px 3px 0;
}
.tree {
    box-sizing: border-box;
    position: relative;
    width: 350px;
    height: 191px;
    border: 1px solid #cdc7c2;
    color: #909293;
    font-size: 14.2px;
    overflow: hidden;
}
.tree-lines {
    position: absolute;
    left: -1px;
    top: -1px;
    width: 350px;
    height: 191px;
}
.node {
    box-sizing: border-box;
    position: relative;
    height: 27px;
    padding-bottom: 1px;
    display: flex;
    align-items: center;
    width: max-content;
}
.d0 { margin-left: 23px; }
.d1 { margin-left: 42px; padding-left: 1px; }
.d2 { margin-left: 60px; padding-left: 3px; }
.d3 { margin-left: 83px; }
.bold {
    font-weight: 700;
    font-size: 13.8px;
}
.n-ic {
    width: 16px;
    height: 16px;
    flex: none;
    margin-right: 6px;
}
.sel {
    width: 170px;
    background: #3584e4;
    color: #ffffff;
}
.props-frame {
    box-sizing: border-box;
    width: 350px;
    height: 199px;
    margin-top: 4px;
    border: 1px solid #cdc7c2;
    border-radius: 3px;
    padding: 2px 3px 3px;
}
.props {
    box-sizing: border-box;
    height: 192px;
    border: 1px solid #cdc7c2;
    display: flex;
    overflow: hidden;
}
.ptable {
    width: 326px;
    flex: none;
}
.prow {
    display: grid;
    grid-template-columns: 134px 1fr;
    height: 24px;
    box-sizing: border-box;
    color: #909293;
    font-size: 14.1px;
    border-bottom: 1px solid #e8e8e6;
    margin-left: 20px;
    position: relative;
}
.prow span {
    height: 24px;
    line-height: 25px;
}
.prow span:first-child {
    padding-left: 3px;
}
.prow span:nth-child(2) {
    border-left: 1px solid #e4e3e1;
    padding-left: 3px;
}
.prow::before {
    content: "";
    position: absolute;
    left: -10px;
    top: 12px;
    width: 10px;
    height: 1px;
    background: #c8c6c3;
}
.prow::after {
    content: "";
    position: absolute;
    left: -11px;
    top: -1px;
    width: 1px;
    height: 25px;
    background: #dedcd9;
}
.prow.head {
    margin-left: 0;
    height: 25px;
    font-weight: 700;
    font-size: 13.8px;
    grid-template-columns: 154px 1fr;
    border-bottom: 1px solid #dedcd9;
}
.prow.head::before, .prow.head::after, .prow.group::before, .prow.group::after {
    display: none;
}
.prow.group {
    margin-left: 0;
    background: #dedbd7;
    color: #000;
    font-weight: 700;
    font-size: 14px;
    border-bottom: 0;
}
.pscroll {
    flex: 1;
    position: relative;
}
.pscroll em {
    position: absolute;
    left: 10px;
    top: 2px;
    width: 3px;
    height: 48px;
    background: #868686;
    border-radius: 2px;
}
.tabs-bottom {
    display: flex;
    width: 160px;
    height: 37px;
    background: #d5d4d1;
    border: 1px solid #c4c2bd;
    border-top: 0;
    box-sizing: border-box;
}
.tabs-bottom .tab {
    width: 78px;
}
.tabs-bottom .tab:first-child {
    width: 80px;
}

.central {
    flex: 1;
    min-width: 0;
    margin-left: 3px;
    display: flex;
    flex-direction: column;
}
.viewport {
    box-sizing: border-box;
    position: relative;
    height: 473px;
    width: 1070px;
    background: #fff;
    border: 2px solid #7fa8dc;
}
.drawing {
    display: block;
    width: 1066px;
    height: 469px;
}
.vscroll {
    position: absolute;
    right: 1px;
    top: 206px;
    width: 3px;
    height: 41px;
    background: #868686;
    border-radius: 2px;
}
.hscroll {
    position: absolute;
    left: 450px;
    bottom: 1px;
    width: 156px;
    height: 3px;
    background: #868686;
    border-radius: 2px;
}
.doc-tabs {
    height: 37px;
    flex: none;
    width: 1070px;
    display: flex;
    background: #d5d4d1;
    border-bottom: 1px solid #c9c7c2;
    box-sizing: border-box;
    font-size: 14px;
}
.doc-tab {
    box-sizing: border-box;
    height: 36px;
    display: flex;
    align-items: center;
    font-weight: 700;
    color: #7b7c7c;
    position: relative;
    border-right: 1px solid #c6c4bf;
}
.doc-tab.first {
    width: 170px;
    padding-left: 6px;
    word-spacing: -1.5px;
}
.doc-tab.on {
    width: 103px;
    padding-left: 10px;
    color: #2e3436;
}
.doc-tab.on::before {
    content: "";
    position: absolute;
    left: -1px;
    right: -1px;
    top: 0;
    height: 4px;
    background: #7fa8dc;
}
.dt-ic {
    width: 16px;
    height: 16px;
    margin-right: 17px;
}
.dt-pg {
    width: 12px;
    height: 16px;
    margin-right: 12px;
}
.dt-x {
    width: 10px;
    height: 10px;
    color: #8d8e8e;
    margin-left: auto;
    margin-right: 11px;
}

.statusbar {
    flex: none;
    height: 42px;
    display: flex;
    align-items: center;
    padding-left: 6px;
    margin-top: auto;
    font-size: 14px;
}
.mouse {
    width: 10px;
    height: 14px;
    margin-left: auto;
    margin-right: 9px;
}
.cad-arr {
    margin: 0 0 0 22px;
}
.size {
    margin-left: 30px;
}
.size-arr {
    margin: 0 29px 0 13px;
}
```
